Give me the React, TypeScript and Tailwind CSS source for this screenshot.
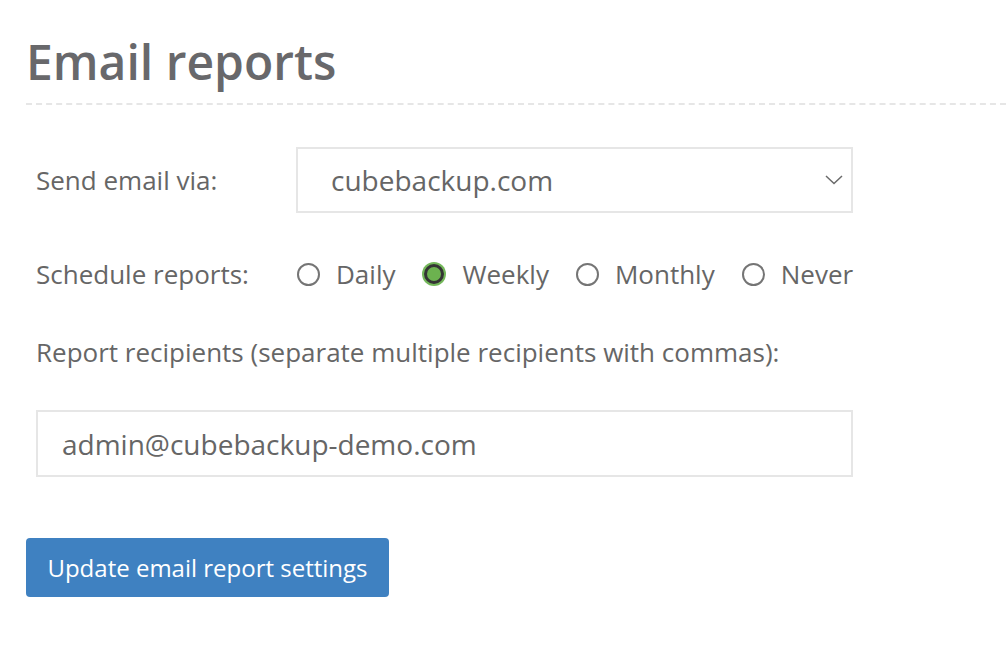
import React from "react";

function Radio({ checked, label }: { checked?: boolean; label: string }) {
  return (
    <label className="flex items-center">
      {checked ? (
        <span className="flex h-[24px] w-[24px] items-center justify-center rounded-full bg-[#74b85a]">
          <span className="h-[20px] w-[20px] rounded-full border-[3px] border-[#343434] bg-[#6cb24f]" />
        </span>
      ) : (
        <span className="h-[23px] w-[23px] rounded-full border-[2px] border-[#757575] bg-white" />
      )}
      <span className="ml-[16px] text-[26px] text-[#666]">{label}</span>
    </label>
  );
}

export default function App() {
  return (
    <div
      className="min-h-[654px] w-[1006px] bg-white"
      style={{ fontFamily: '"Open Sans", "Liberation Sans", sans-serif' }}
    >
      <div className="pl-[26px] pt-[32px]">
        <h1 className="h-[60px] text-[48px] font-semibold leading-[60px] text-[#68686b]">
          Email reports
        </h1>
        <div className="mt-[11px] border-t-[2px] border-dashed border-[#e6e6e6]" />

        <div className="pl-[10px]">
          <div className="mt-[42px] flex items-center">
            <div className="w-[260px] text-[26px] text-[#666]">Send email via:</div>
            <div className="flex h-[66px] w-[557px] items-center justify-between border-[2px] border-[#e6e6e6] pl-[33px] pr-[8px]">
              <span className="text-[28px] text-[#666]">cubebackup.com</span>
              <svg width="18" height="10" viewBox="0 0 18 10" fill="none">
                <polyline points="1,1 9,8.5 17,1" stroke="#6a6a6a" strokeWidth="1.5" />
              </svg>
            </div>
          </div>

          <div className="mt-[44px] flex h-[34px] items-center">
            <div className="w-[261px] text-[26px] text-[#666]">Schedule reports:</div>
            <div className="flex items-center gap-[27px]">
              <Radio label="Daily" />
              <Radio checked label="Weekly" />
              <Radio label="Monthly" />
              <Radio label="Never" />
            </div>
          </div>

          <div className="mt-[44px] text-[26px] leading-[34px] text-[#666]">
            Report recipients (separate multiple recipients with commas):
          </div>

          <div className="mt-[41px] flex h-[67px] w-[817px] items-center border-[2px] border-[#e6e6e6] pl-[24px]">
            <span className="text-[28px] text-[#666]">admin@cubebackup-demo.com</span>
          </div>
        </div>

        <button className="mt-[61px] flex h-[59px] w-[363px] items-center justify-center rounded-[4px] bg-[#3f81c1] text-[24px] text-white">
          Update email report settings
        </button>
      </div>
    </div>
  );
}
